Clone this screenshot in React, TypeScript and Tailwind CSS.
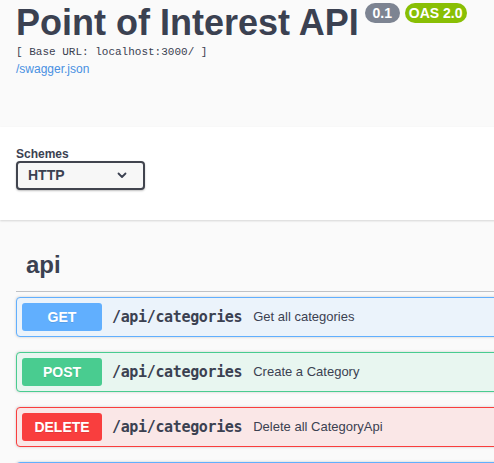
import React from 'react';

const OPS = [
  { method: 'GET', path: '/api/categories', summary: 'Get all categories', box: 'border-[#61affe] bg-[#ebf3fb]', badge: 'bg-[#61affe]' },
  { method: 'POST', path: '/api/categories', summary: 'Create a Category', box: 'border-[#49cc90] bg-[#e8f6f0]', badge: 'bg-[#49cc90]' },
  { method: 'DELETE', path: '/api/categories', summary: 'Delete all CategoryApi', box: 'border-[#f93e3e] bg-[#fae7e7]', badge: 'bg-[#f93e3e]' },
];

export default function App() {
  return (
    <div className="h-[463px] w-full overflow-hidden bg-[#fafafa] font-['Liberation_Sans',Arial,sans-serif] text-[#3b4151]">
      <div className="w-[560px]">
        {/* info */}
        <div className="h-[127px] px-4 pt-[5px]">
          <div className="flex items-start">
            <h1 className="text-[36px] leading-[36px] font-bold text-[#3b4151]">Point of Interest API</h1>
            <span className="ml-[6px] mt-[-2px] flex h-[20px] w-[35px] items-center justify-center rounded-full bg-[#7d8492] text-[14px] font-bold text-white">0.1</span>
            <span className="ml-[5px] mt-[-2px] flex h-[20px] w-[62px] items-center justify-center rounded-full bg-[#89bf04] text-[14px] font-bold text-white">OAS 2.0</span>
          </div>
          <div className="mt-[3px] font-['Liberation_Mono',monospace] text-[11px] leading-[16px] text-[#3b4151]">[ Base URL: localhost:3000/ ]</div>
          <a className="mt-[1px] block text-[12px] leading-[16px] text-[#4990e2]">/swagger.json</a>
        </div>

        {/* schemes */}
        <div className="bg-white px-4 pt-[20px] pb-[30px] shadow-[0_1px_2px_0_rgba(0,0,0,0.15)]">
          <div className="text-[12px] font-bold leading-[14px]">Schemes</div>
          <div className="flex h-[29px] w-[129px] items-center justify-between rounded-[4px] border-2 border-[#41444e] bg-[#f7f7f7] pl-[10px] pr-[16px] shadow-[0_1px_2px_0_rgba(0,0,0,0.25)]">
            <span className="text-[14px] font-bold">HTTP</span>
            <svg width="10" height="7" viewBox="0 0 10 7" fill="none">
              <path d="M1.5 1.5 L5 5 L8.5 1.5" stroke="#3b4151" strokeWidth="1.8" strokeLinecap="round" strokeLinejoin="round" />
            </svg>
          </div>
        </div>

        {/* operations */}
        <div className="px-4 pt-[17px]">
          <h4 className="border-b border-[rgba(59,65,81,0.3)] pt-[13px] pb-[11px] pl-[10px] text-[24px] leading-[30px] font-bold">api</h4>
          <div className="mt-[5px] flex flex-col gap-[15px]">
            {OPS.map((op, i) => (
              <div key={i} className={`flex h-[40px] items-center rounded-[4px] border px-[5px] shadow-[0_0_3px_rgba(0,0,0,0.19)] ${op.box}`}>
                <span className={`flex h-[28px] w-[80px] items-center justify-center rounded-[3px] text-[14px] font-bold text-white [text-shadow:0_1px_0_rgba(0,0,0,0.1)] ${op.badge}`}>
                  {op.method}
                </span>
                <span className="px-[10px] font-['DejaVu_Sans_Mono',monospace] text-[15px] font-bold tracking-[-0.35px] text-[#3b4151]">{op.path}</span>
                <span className="ml-[1px] text-[13px] text-[#3b4151]">{op.summary}</span>
              </div>
            ))}
            {/* next operation, only its top edge is in view */}
            <div className="h-[40px] rounded-[4px] border border-[#61affe] bg-[#ebf3fb] shadow-[0_0_3px_rgba(0,0,0,0.19)]" />
          </div>
        </div>
      </div>
    </div>
  );
}
